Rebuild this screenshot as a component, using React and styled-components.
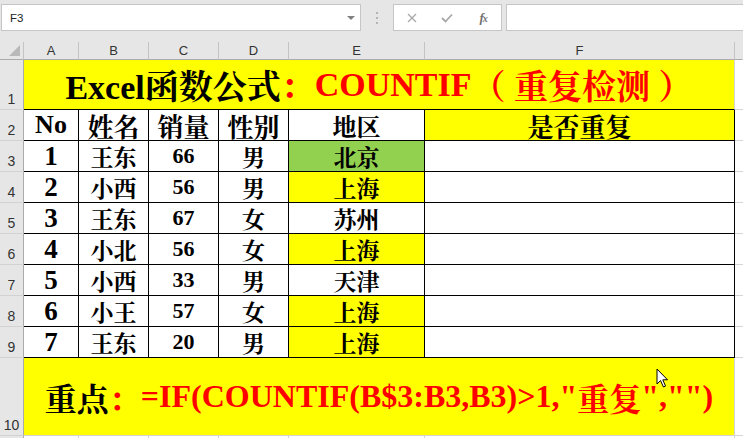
import React from "react";
import styled, { createGlobalStyle } from "styled-components";

const GlobalStyle = createGlobalStyle`
  html, body { margin: 0; padding: 0; background: #fff; overflow: hidden; }
  * { box-sizing: border-box; }
`;

const SERIF = `"Liberation Serif", "Noto Serif CJK SC", "Noto Sans CJK SC", serif`;
const UI = `"Liberation Sans", "Noto Sans", sans-serif`;

const Page = styled.div`
  position: relative;
  width: 743px;
  height: 438px;
  overflow: hidden;
  font-family: ${UI};
`;

const FormulaBar = styled.div`
  height: 42px;
  background: #e6e6e6;
  display: flex;
  align-items: flex-start;
  padding-top: 4px;
`;

const NameBox = styled.div`
  margin-left: 1px;
  width: 360px;
  height: 27px;
  border: 1px solid #c6c6c6;
  background: #fff;
  display: flex;
  align-items: center;
  justify-content: space-between;
  padding: 0 5px 0 8px;
  font-size: 11.5px;
  color: #222;
`;

const DropArrow = styled.span`
  width: 0;
  height: 0;
  border-left: 4px solid transparent;
  border-right: 4px solid transparent;
  border-top: 4px solid #808080;
`;

const Grip = styled.div`
  width: 32px;
  height: 27px;
  display: flex;
  flex-direction: column;
  align-items: center;
  justify-content: center;
  gap: 3px;
`;

const Dot = styled.span`
  width: 2px;
  height: 2px;
  background: #b4b4b4;
`;

const ButtonBox = styled.div`
  width: 109px;
  height: 27px;
  border: 1px solid #c6c6c6;
  background: #fff;
  display: grid;
  grid-template-columns: repeat(3, 1fr);
  align-items: center;
  justify-items: center;
`;

const Fx = styled.span`
  font-family: ${SERIF};
  font-style: italic;
  font-weight: bold;
  font-size: 13px;
  color: #707070;
  letter-spacing: -1px;
  & small { font-size: 10px; }
`;

const FormulaInput = styled.div`
  margin-left: 4px;
  flex: 1;
  height: 27px;
  border: 1px solid #c6c6c6;
  border-right: none;
  background: #fff;
`;

const Sheet = styled.div`
  display: grid;
  grid-template-columns: 24px 55px 70px 70px 70px 136px 310px 8px;
  grid-template-rows: 18px 50px repeat(8, 31px) 78px 31px;
`;

const Corner = styled.div`
  position: relative;
  background: #e6e6e6;
  border-right: 1px solid #c4c4c4;
  border-bottom: 1px solid #ababab;
  &::after {
    content: "";
    position: absolute;
    right: 3px;
    bottom: 3px;
    border-left: 11px solid transparent;
    border-bottom: 11px solid #b9b9b9;
  }
`;

const ColHeader = styled.div`
  background: #e6e6e6;
  border-right: 1px solid ${(p) => (p.$last ? "#e6e6e6" : "#c4c4c4")};
  border-bottom: 1px solid #ababab;
  display: flex;
  align-items: flex-end;
  justify-content: center;
  padding-bottom: 1px;
  font-size: 13px;
  color: #333;
`;

const RowHeader = styled.div`
  background: #e6e6e6;
  border-right: 1px solid #ababab;
  border-bottom: 1px solid #d2d2d2;
  display: flex;
  align-items: flex-end;
  justify-content: center;
  padding-bottom: 2px;
  font-size: 14px;
  color: #333;
`;

const Cell = styled.div`
  background: ${(p) => p.$bg || "#fff"};
  border-right: 1px solid #000;
  border-bottom: 1px solid #000;
  display: flex;
  align-items: center;
  justify-content: center;
  font-family: ${SERIF};
  font-weight: bold;
  font-size: ${(p) => p.$size || 23}px;
  color: #000;
  white-space: nowrap;
`;

const Filler = styled.div`
  background: #fff;
  border-bottom: 1px solid #d4d4d4;
  border-right: ${(p) => (p.$col ? "1px solid #d4d4d4" : "none")};
`;

const Merged = styled.div`
  grid-column: span 6;
  background: #ffff00;
  border-right: 1px solid #d4d4d4;
  border-bottom: 1px solid ${(p) => (p.$blackBottom ? "#000" : "#d4d4d4")};
  display: flex;
  align-items: center;
  justify-content: center;
  font-family: ${SERIF};
  font-weight: bold;
  font-size: ${(p) => p.$size}px;
  white-space: pre;
  color: #000;
`;

const Red = styled.span`
  color: #ff0000;
`;

const RedLatin = styled.span`
  color: #ff0000;
  font-family: "Liberation Serif", serif;
  font-weight: bold;
`;

const Cursor = styled.svg`
  position: absolute;
  left: 656px;
  top: 368px;
`;

const YELLOW = "#ffff00";
const GREEN = "#92d050";

const data = [
  ["1", "王东", "66", "男", "北京", GREEN],
  ["2", "小西", "56", "男", "上海", YELLOW],
  ["3", "王东", "67", "女", "苏州", null],
  ["4", "小北", "56", "女", "上海", YELLOW],
  ["5", "小西", "33", "男", "天津", null],
  ["6", "小王", "57", "女", "上海", YELLOW],
  ["7", "王东", "20", "男", "上海", YELLOW],
];

export default function App() {
  return (
    <Page>
      <GlobalStyle />
      <FormulaBar>
        <NameBox>
          <span>F3</span>
          <DropArrow />
        </NameBox>
        <Grip>
          <Dot />
          <Dot />
          <Dot />
        </Grip>
        <ButtonBox>
          <svg width="10" height="10" viewBox="0 0 10 10">
            <path d="M1 1 L9 9 M9 1 L1 9" stroke="#a8a8a8" strokeWidth="1.3" fill="none" />
          </svg>
          <svg width="12" height="10" viewBox="0 0 12 10">
            <path d="M1 5 L4.5 8.5 L11 1.5" stroke="#a8a8a8" strokeWidth="1.8" fill="none" />
          </svg>
          <Fx>
            f<small>x</small>
          </Fx>
        </ButtonBox>
        <FormulaInput />
      </FormulaBar>

      <Sheet>
        <Corner />
        {["A", "B", "C", "D", "E", "F"].map((c) => (
          <ColHeader key={c}>{c}</ColHeader>
        ))}
        <ColHeader $last />

        <RowHeader>1</RowHeader>
        <Merged $size={34} $blackBottom>
          Excel函数公式<Red>：</Red>
          <RedLatin>COUNTIF</RedLatin>
          <Red>（ 重复检测 ）</Red>
        </Merged>
        <Filler />

        <RowHeader>2</RowHeader>
        <Cell $size={26}>No</Cell>
        <Cell $size={26}>姓名</Cell>
        <Cell $size={26}>销量</Cell>
        <Cell $size={26}>性别</Cell>
        <Cell $size={24}>地区</Cell>
        <Cell $size={26} $bg={YELLOW}>
          是否重复
        </Cell>
        <Filler />

        {data.map((r, i) => (
          <React.Fragment key={i}>
            <RowHeader>{i + 3}</RowHeader>
            <Cell $size={27}>{r[0]}</Cell>
            <Cell $size={23}>{r[1]}</Cell>
            <Cell $size={22}>{r[2]}</Cell>
            <Cell $size={23}>{r[3]}</Cell>
            <Cell $size={23} $bg={r[5]}>
              {r[4]}
            </Cell>
            <Cell />
            <Filler />
          </React.Fragment>
        ))}

        <RowHeader>10</RowHeader>
        <Merged $size={32}>
          重点<Red>：</Red>
          <RedLatin>=IF(COUNTIF(B$3:B3,B3)&gt;1,"</RedLatin>
          <Red>重复</Red>
          <RedLatin>",""</RedLatin>
          <RedLatin>)</RedLatin>
        </Merged>
        <Filler />

        <RowHeader />
        {[0, 1, 2, 3, 4, 5].map((k) => (
          <Filler key={k} $col />
        ))}
        <Filler />
      </Sheet>

      <Cursor width="14" height="21" viewBox="0 0 14 21">
        <path
          d="M1 1 L1 16 L4.5 12.5 L7.5 19 L9.5 18 L6.8 11.8 L11.5 11.8 Z"
          fill="#fff"
          stroke="#000"
          strokeWidth="1"
          strokeLinejoin="round"
        />
      </Cursor>
    </Page>
  );
}
